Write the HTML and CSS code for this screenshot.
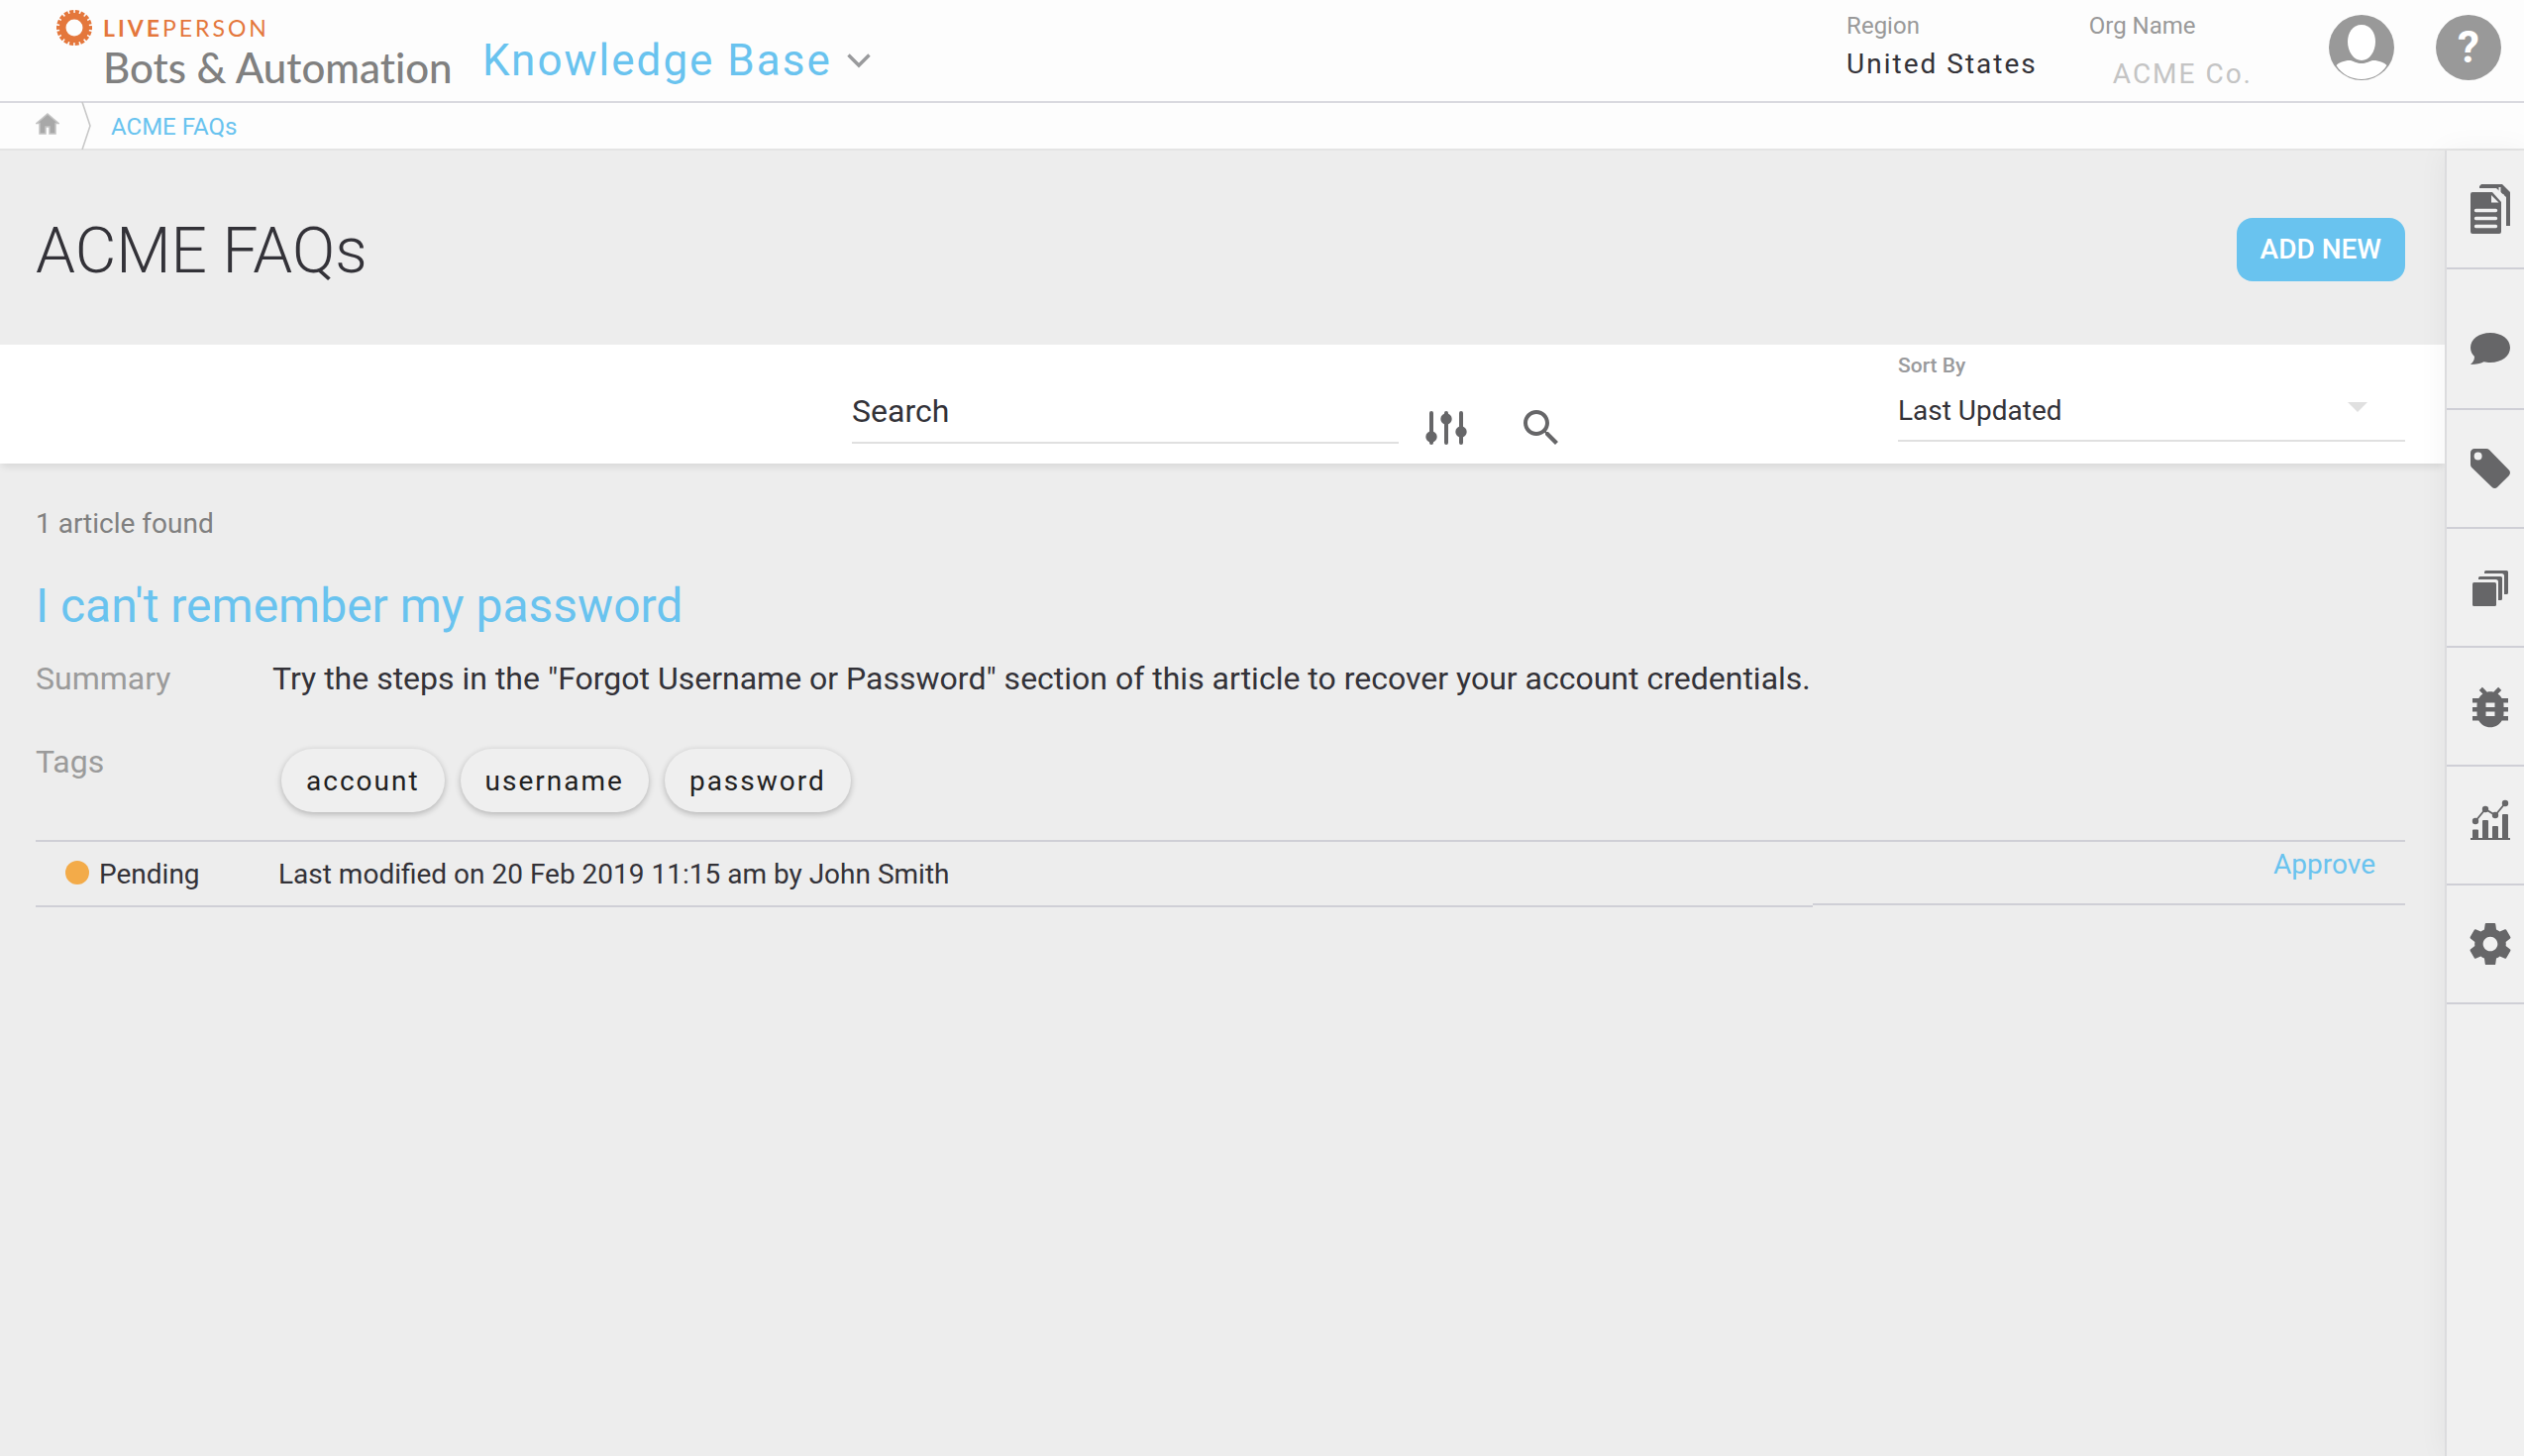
FILE: index.html
```html
<!DOCTYPE html>
<html lang="en">
<head>
<meta charset="utf-8">
<title>Knowledge Base - ACME FAQs</title>
<meta name="viewport" content="width=device-width, initial-scale=1">
<link rel="stylesheet" href="styles.css">
</head>
<body>
<header class="topbar">
  <a class="brand" href="#">
    <svg class="brand-mark" viewBox="0 0 36 36" aria-hidden="true">
      <circle cx="18" cy="18" r="11.8" fill="none" stroke="#e4773c" stroke-width="6.6"/>
      <circle cx="18" cy="18" r="16" fill="none" stroke="#e4773c" stroke-width="4" pathLength="36" stroke-dasharray="1.45 .55" stroke-dashoffset=".7"/>
    </svg>
    <span class="brand-text">
      <span class="brand-name"><b>LIVE</b>PERSON</span>
      <span class="brand-product">Bots &amp; Automation</span>
    </span>
  </a>
  <button class="app-switch" type="button">Knowledge Base
    <svg class="app-caret" viewBox="0 0 26 18" aria-hidden="true"><path d="M2.500 3.500L13 14L23.500 3.500" fill="none" stroke="#999a9c" stroke-width="3.400"/></svg>
  </button>
  <dl class="account">
    <div class="region"><dt>Region</dt><dd>United States</dd></div>
    <div class="org"><dt>Org Name</dt><dd>ACME Co.</dd></div>
  </dl>
  <button class="round" type="button" aria-label="Profile">
    <svg viewBox="0 0 66 66" aria-hidden="true"><circle cx="33" cy="33" r="33" fill="#999"/><path d="M33 10c9 0 14 8 14 17 0 10-6 19-14 19s-14-9-14-19c0-9 5-17 14-17z" fill="#fff"/><path d="M7.500 51C10 48 17 45.500 22 46c4 1 6 3 11 3s7-2 11-3c5-.5 12 2 14.500 5C53 60 43 65 33 65S13 60 7.500 51z" fill="#fff"/></svg>
  </button>
  <button class="round help" type="button" aria-label="Help">?</button>
</header>

<nav class="crumbs" aria-label="Breadcrumb">
  <a class="home" href="#" aria-label="Home"><svg viewBox="0 0 24 22" aria-hidden="true"><path d="M12 1L23 10.500h-3V21h-6v-7h-4v7H4V10.500H1z" fill="#a8a8a8" stroke="#c4c4c4" stroke-width="1.500"/></svg></a>
  <svg class="crumb-sep" viewBox="0 0 10 48" aria-hidden="true"><path d="M1 0L9 24L1 48" fill="none" stroke="#c8c8c8" stroke-width="1.600"/></svg>
  <a class="crumb" href="#">ACME FAQs</a>
</nav>

<div class="shell">
  <main class="content">
    <div class="page-head">
      <h1>ACME FAQs</h1>
      <button class="add" type="button">ADD NEW</button>
    </div>

    <form class="toolbar">
      <div class="search">
        <input class="search-box" type="text" placeholder="Search" aria-label="Search">
        <button class="tool" type="button" aria-label="Filters">
          <svg viewBox="0 0 48 48" aria-hidden="true"><g stroke="#666668" stroke-width="4" stroke-linecap="round"><path d="M9 9v30M24 9v30M39 9v30"/></g><g fill="#666668"><circle cx="9" cy="33" r="5.700"/><circle cx="24" cy="15" r="5.700"/><circle cx="39" cy="28" r="5.700"/></g></svg>
        </button>
        <button class="tool" type="submit" aria-label="Run search">
          <svg viewBox="0 0 24 24" aria-hidden="true"><path fill="#666668" d="M15.500 14h-.79l-.28-.27C15.410 12.590 16 11.110 16 9.500 16 5.910 13.090 3 9.500 3S3 5.910 3 9.500 5.910 16 9.500 16c1.610 0 3.090-.59 4.230-1.570l.27.28v.79l5 4.990L20.490 19l-4.990-5zm-6 0C7.010 14 5 11.990 5 9.500S7.010 5 9.500 5 14 7.010 14 9.500 11.990 14 9.500 14z"/></svg>
        </button>
      </div>
      <div class="sort">
        <label for="sort-by">Sort By</label>
        <select id="sort-by"><option>Last Updated</option><option>Date Created</option></select>
        <svg class="sort-caret" viewBox="0 0 20 10" aria-hidden="true"><path d="M0 0h20L10 10z" fill="#e0e0e0"/></svg>
      </div>
    </form>

    <section class="results">
      <p class="count">1 article found</p>
      <article>
        <h2><a href="#">I can't remember my password</a></h2>
        <dl class="details">
          <dt>Summary</dt>
          <dd>Try the steps in the "Forgot Username or Password" section of this article to recover your account credentials.</dd>
          <dt>Tags</dt>
          <dd><ul class="tags"><li>account</li><li>username</li><li>password</li></ul></dd>
        </dl>
        <div class="status">
          <div class="status-info">
            <span class="dot"></span>
            <span class="state">Pending</span>
            <span>Last modified on 20 Feb 2019 11:15 am by John Smith</span>
          </div>
          <div class="status-action"><a href="#">Approve</a></div>
        </div>
      </article>
    </section>
  </main>

  <nav class="rail" aria-label="Tools">
    <a href="#" aria-label="Articles"><svg viewBox="0 0 60 60"><path d="M21 5h21l8 8v34h-4V18L36 9H19V7z"/><path d="M39.500 8v8l4 0" fill="none" stroke="#f0f0f0" stroke-width="2"/><path d="M12 13h20l9 10v30a2 2 0 0 1-2 2H12a2 2 0 0 1-2-2V15a2 2 0 0 1 2-2z"/><path d="M31 16v7.500h7.500z" fill="#f0f0f0"/><path d="M15.500 31.500h20M15.500 39.500h20M15.500 47.500h20" stroke="#f0f0f0" stroke-width="3.400" stroke-linecap="round"/></svg></a>
    <a class="tall" href="#" aria-label="Conversations"><svg viewBox="0 0 60 60"><path d="M30 14c11.500 0 20 6.500 20 15s-8.500 15-20 15c-2.500 0-4.500-.3-6.500-.8C20 45 16 46 10 46c2.500-2.500 4-4.500 4-8-2.500-2.500-4-5.500-4-9 0-8.500 8.500-15 20-15z"/></svg></a>
    <a href="#" aria-label="Tags"><svg viewBox="-3 -3 30 30"><path d="M4 2h6c.6 0 1.100.2 1.500.6l9.900 10.200c.8.8.8 2 0 2.800l-5.800 5.800c-.8.8-2 .8-2.800 0L2.600 11.500C2.200 11.100 2 10.600 2 10V4c0-1.100.9-2 2-2zM5.800 7.800a2 2 0 1 0 0-4 2 2 0 0 0 0 4z" fill-rule="evenodd"/></svg></a>
    <a href="#" aria-label="Collections"><svg viewBox="0 0 60 60"><rect x="12" y="25" width="24" height="24" rx="1.500"/><path d="M18 22v-1.500a1.500 1.500 0 0 1 1.500-1.500h21a1.500 1.500 0 0 1 1.500 1.500V41.500a1.500 1.500 0 0 1-1.500 1.500H38V24.500a2.500 2.500 0 0 0-2.500-2.500zM24 16v-1.500a1.500 1.500 0 0 1 1.500-1.500h21a1.500 1.500 0 0 1 1.500 1.500V35.500a1.500 1.500 0 0 1-1.500 1.500H44V18.500a2.500 2.500 0 0 0-2.500-2.500z"/></svg></a>
    <a href="#" aria-label="Debug"><svg viewBox="-1.333 -1.780 26.667 26.667"><path d="M20 8h-2.810c-.45-.78-1.070-1.450-1.820-1.960L17 4.410 15.590 3l-2.170 2.170C12.960 5.060 12.490 5 12 5s-.96.06-1.410.17L8.410 3 7 4.410l1.620 1.630C7.880 6.550 7.260 7.220 6.810 8H4v2h2.090c-.05.33-.09.66-.09 1v1H4v2h2v1c0 .34.04.67.09 1H4v2h2.810c1.040 1.790 2.970 3 5.190 3s4.150-1.210 5.190-3H20v-2h-2.090c.05-.33.09-.66.09-1v-1h2v-2h-2v-1c0-.34-.04-.67-.09-1H20V8zm-6 8h-4v-2h4v2zm0-4h-4v-2h4v2z"/></svg></a>
    <a href="#" aria-label="Analytics"><svg viewBox="0 0 60 60"><path d="M10 43h40v2H10zM12 35.500a1 1 0 0 1 1-1h4a1 1 0 0 1 1 1V43h-6zM22 26a1 1 0 0 1 1-1h4a1 1 0 0 1 1 1v17h-6zM32 32a1 1 0 0 1 1-1h4a1 1 0 0 1 1 1v11h-6zM42 20a1 1 0 0 1 1-1h4a1 1 0 0 1 1 1v23h-6z"/><path d="M15 26L25 14L35 20L45 8" fill="none" stroke="#666668" stroke-width="1.800"/><circle cx="15" cy="26" r="3.200"/><circle cx="25" cy="14" r="3.200"/><circle cx="35" cy="20" r="3.200"/><circle cx="45" cy="8" r="3.200"/></svg></a>
    <a href="#" aria-label="Settings"><svg viewBox="-2.250 -2.250 28.500 28.500"><path d="M19.430 12.980c.04-.32.07-.64.07-.98s-.03-.66-.07-.98l2.110-1.650c.19-.15.24-.42.12-.64l-2-3.460c-.12-.22-.39-.3-.61-.22l-2.490 1c-.52-.4-1.080-.73-1.690-.98l-.38-2.650C14.460 2.180 14.250 2 14 2h-4c-.25 0-.46.18-.49.42l-.38 2.650c-.61.25-1.170.59-1.690.98l-2.490-1c-.23-.09-.49 0-.61.22l-2 3.460c-.13.22-.07.49.12.64l2.110 1.650c-.04.32-.07.65-.07.98s.03.66.07.98l-2.110 1.650c-.19.15-.24.42-.12.64l2 3.460c.12.22.39.3.61.22l2.490-1c.52.4 1.080.73 1.690.98l.38 2.650c.03.24.24.42.49.42h4c.25 0 .46-.18.49-.42l.38-2.650c.61-.25 1.170-.59 1.690-.98l2.490 1c.23.09.49 0 .61-.22l2-3.460c.12-.22.07-.49-.12-.64l-2.110-1.650zM12 15.500c-1.930 0-3.500-1.570-3.500-3.500s1.570-3.500 3.500-3.500 3.500 1.570 3.500 3.500-1.570 3.500-3.500 3.500z"/></svg></a>
  </nav>
</div>
</body>
</html>
```
FILE: styles.css
```css
:root {
  --blue: #69c3ef;
  --ink: #333238;
  --line: #cfcfd6;
}

* {
  box-sizing: border-box;
}

body,
h1,
h2,
p,
dl,
dd,
ul {
  margin: 0;
  padding: 0;
}

body {
  display: flex;
  flex-direction: column;
  min-height: 100vh;
  background: #ededed;
  color: var(--ink);
  font: 28px/32px Roboto, "Liberation Sans", sans-serif;
}

a {
  color: var(--blue);
  text-decoration: none;
}

button,
input,
select {
  border: 0;
  background: none;
  color: inherit;
  font: inherit;
  padding: 0;
}

svg {
  display: block;
}

/* Top bar */
.topbar {
  display: flex;
  align-items: flex-start;
  min-height: 104px;
  padding: 0 23px 0 57px;
  background: #fdfdfd;
  border-bottom: 2px solid #d9d9df;
}

.brand {
  display: flex;
  gap: 11px;
  width: 399px;
  padding-top: 10px;
}

.brand-mark {
  flex: none;
  width: 36px;
  height: 36px;
}

.brand-text {
  display: flex;
  flex-direction: column;
  white-space: nowrap;
}

.brand-name {
  color: #e4773c;
  font: 400 23px/36px Lato, sans-serif;
  letter-spacing: 3px;
}

.brand-name b {
  font-weight: 700;
}

.brand-product {
  color: #808080;
  font: 500 42px/44px Lato, sans-serif;
  font-variant-ligatures: none;
}

.app-switch {
  display: flex;
  align-items: center;
  gap: 14px;
  margin-left: 31px;
  padding-top: 37px;
  color: var(--blue);
  font-size: 44px;
  line-height: 48px;
  letter-spacing: 2px;
}

.app-caret {
  width: 26px;
  height: 18px;
}

.account {
  display: flex;
  gap: 52px;
  margin-left: auto;
}

.account dt {
  padding-top: 10px;
  color: #999;
  font-size: 24px;
}

.account dd {
  padding-top: 7px;
  letter-spacing: 2px;
}

.account .org dd {
  padding: 17px 0 0 24px;
  color: #c4c4c4;
}

.round {
  flex: none;
  width: 66px;
  height: 66px;
  margin: 15px 0 0 77px;
  border-radius: 50%;
}

.help {
  margin-left: 42px;
  background: #999;
  color: #fff;
  font-size: 44px;
  font-weight: 700;
}

/* Breadcrumb */
.crumbs {
  display: flex;
  align-items: center;
  height: 48px;
  padding-left: 36px;
  background: #fdfdfd;
  border-bottom: 2px solid #e4e4e4;
}

.home svg {
  width: 24px;
  height: 22px;
}

.home {
  padding-bottom: 4px;
}

.crumb-sep {
  width: 10px;
  height: 48px;
  margin: 0 20px 0 22px;
}

.crumb {
  padding-top: 1px;
  font-size: 24px;
}

/* Page */
.shell {
  display: flex;
  flex: 1;
}

.content {
  flex: 1;
  min-width: 0;
}

.page-head {
  display: flex;
  align-items: center;
  justify-content: space-between;
  padding: 58px 40px 54px 36px;
}

h1 {
  padding-top: 4px;
  font-size: 64px;
  font-weight: 300;
  line-height: 80px;
}

.add {
  height: 64px;
  padding: 0 24px;
  border-radius: 16px;
  background: var(--blue);
  color: #fff;
  font-weight: 500;
}

.toolbar {
  display: grid;
  grid-template-columns: 1fr auto 1fr;
  height: 120px;
  padding: 0 40px 0 36px;
  background: #fff;
  box-shadow: 0 5px 8px -2px rgba(0, 0, 0, .1);
}

.search {
  display: flex;
  grid-column: 2;
  align-items: flex-start;
  padding-top: 36px;
}

.search-box {
  width: 552px;
  height: 64px;
  border-bottom: 2px solid #e0e0e0;
  border-radius: 0;
  font-size: 32px;
  outline: 0;
}

.search-box::placeholder {
  color: var(--ink);
  opacity: 1;
}

.tool {
  display: flex;
  justify-content: center;
  width: 96px;
  padding-top: 24px;
}

.tool svg {
  width: 48px;
  height: 48px;
}

.sort {
  position: relative;
  justify-self: end;
  width: 512px;
}

.sort label {
  display: block;
  padding-top: 5px;
  color: #999a9c;
  font-size: 21px;
  font-weight: 500;
}

.sort select {
  appearance: none;
  width: 100%;
  height: 61px;
  padding-top: 1px;
  border-bottom: 2px solid #e0e0e0;
  border-radius: 0;
}

.sort-caret {
  position: absolute;
  top: 58px;
  right: 38px;
  width: 20px;
  height: 10px;
  pointer-events: none;
}

/* Results */
.results {
  padding: 45px 40px 40px 36px;
}

.count {
  color: #808080;
}

h2 {
  margin-top: 39px;
  font-size: 48px;
  font-weight: 400;
  line-height: 56px;
}

.details {
  display: grid;
  grid-template-columns: 239px 1fr;
  margin-top: 25px;
  font-size: 32px;
  line-height: 40px;
}

.details dt {
  color: #9b9b9b;
}

.details dt:nth-of-type(2) {
  padding-top: 44px;
}

.tags {
  display: flex;
  gap: 16px;
  padding: 51px 0 28px 9px;
  list-style: none;
}

.tags li {
  padding: 17px 25px 15px;
  border-radius: 32px;
  background: #efefef;
  color: #212121;
  font-size: 28px;
  line-height: 32px;
  letter-spacing: 2px;
  box-shadow: 0 2px 6px rgba(0, 0, 0, .25);
}

.status {
  display: grid;
  grid-template-columns: 3fr 1fr;
  align-items: start;
  border-top: 2px solid var(--line);
}

.status-info {
  display: flex;
  align-items: center;
  height: 66px;
  padding: 2px 0 0 30px;
  border-bottom: 2px solid var(--line);
}

.dot {
  width: 24px;
  height: 24px;
  margin: 0 10px 4px 0;
  border-radius: 50%;
  background: #f3ab49;
}

.state {
  width: 181px;
}

.status-action {
  height: 64px;
  padding: 7px 30px 0 0;
  border-bottom: 2px solid var(--line);
  text-align: right;
}

/* Right rail */
.rail {
  flex: none;
  width: 80px;
  background: #f0f0f0;
  border-left: 2px solid #dcdcde;
  box-shadow: 0 0 30px rgba(0, 0, 0, .05);
}

.rail a {
  display: flex;
  align-items: center;
  justify-content: center;
  height: 120px;
  padding-left: 10px;
  border-bottom: 2px solid var(--line);
}

.rail .tall {
  height: 142px;
  padding-top: 20px;
}

.rail svg {
  flex: none;
  width: 60px;
  height: 60px;
  fill: #666668;
}
```
